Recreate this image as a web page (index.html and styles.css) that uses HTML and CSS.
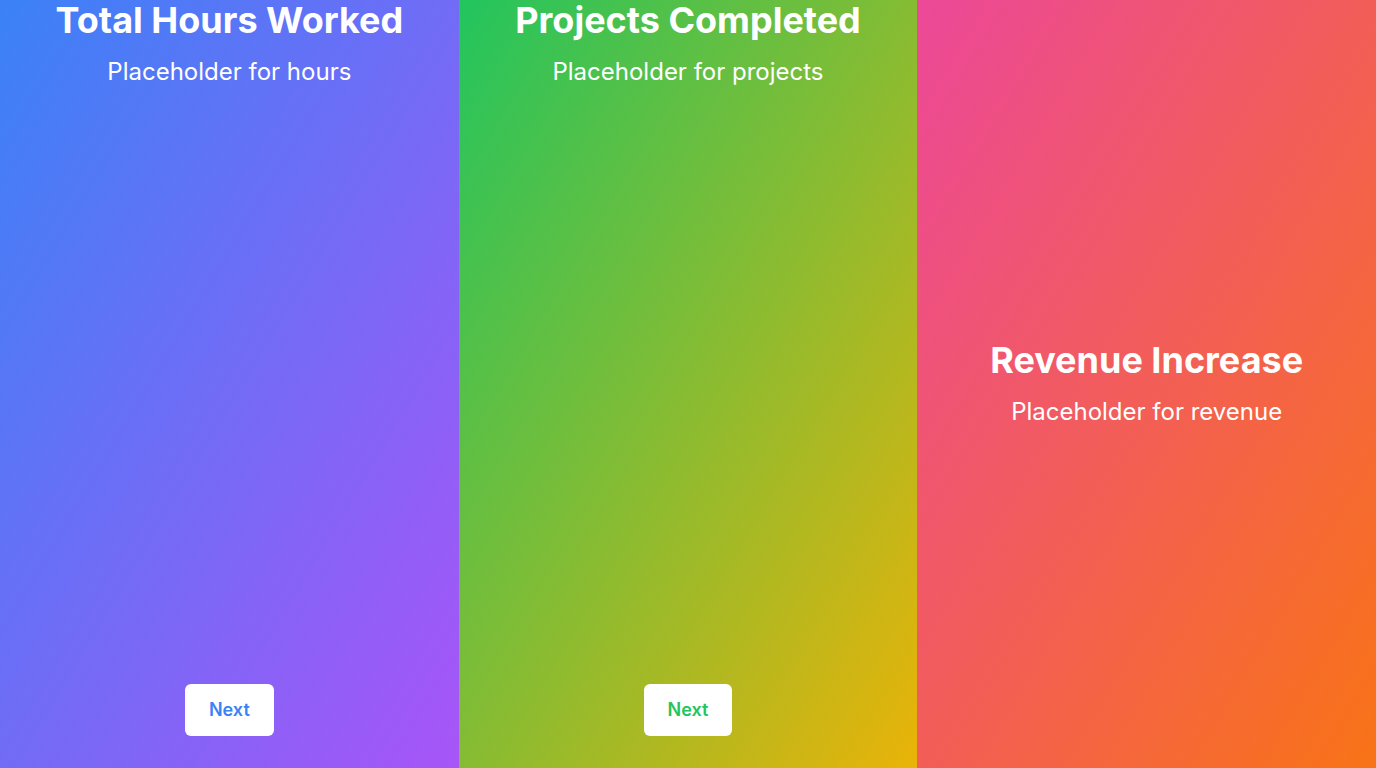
FILE: index.html
```html
<!DOCTYPE html>
<html lang="en">
<head>
<meta charset="utf-8">
<title>Stats</title>
<link rel="stylesheet" href="styles.css">
</head>
<body>
<main class="panels">
  <section class="panel panel-blue">
    <div class="panel-body">
      <h2 class="panel-title">Total Hours Worked</h2>
      <p class="panel-text">Placeholder for hours</p>
    </div>
    <button class="next-btn next-blue">Next</button>
  </section>
  <section class="panel panel-green">
    <div class="panel-body">
      <h2 class="panel-title">Projects Completed</h2>
      <p class="panel-text">Placeholder for projects</p>
    </div>
    <button class="next-btn next-green">Next</button>
  </section>
  <section class="panel panel-pink panel-center">
    <div class="panel-body">
      <h2 class="panel-title">Revenue Increase</h2>
      <p class="panel-text">Placeholder for revenue</p>
    </div>
  </section>
</main>
</body>
</html>
```

FILE: styles.css
```css
* { box-sizing: border-box; }
html, body {
  margin: 0;
  padding: 0;
  height: 100%;
}
body {
  font-family: Inter, "Noto Sans", sans-serif;
  color: #ffffff;
  overflow: hidden;
}
.panels {
  display: flex;
  height: 768px;
}
.panel {
  flex: 1 1 0;
  display: flex;
  flex-direction: column;
  justify-content: space-between;
  align-items: center;
  text-align: center;
  padding-bottom: 32px;
}
.panel-center {
  justify-content: center;
  padding-bottom: 0;
}
.panel-blue { background: linear-gradient(to bottom right, #3b82f6, #a855f7); }
.panel-green { background: linear-gradient(to bottom right, #22c55e, #eab308); }
.panel-pink { background: linear-gradient(to bottom right, #ec4899, #f97316); }
.panel-title {
  margin: 0 0 16px;
  font-size: 36px;
  line-height: 40px;
  font-weight: 700;
}
.panel-text {
  margin: 0;
  font-size: 24px;
  line-height: 32px;
  font-weight: 400;
}
.next-btn {
  border: none;
  background: #ffffff;
  border-radius: 6px;
  padding: 12px 24px;
  font-family: Inter, "Noto Sans", sans-serif;
  font-size: 18px;
  line-height: 28px;
  font-weight: 600;
  cursor: pointer;
}
.next-blue { color: #3b82f6; }
.next-green { color: #22c55e; }
```
